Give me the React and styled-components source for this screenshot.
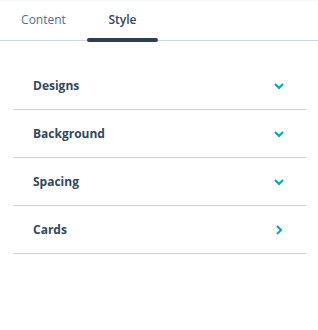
import React from 'react';
import styled, { createGlobalStyle } from 'styled-components';

const GlobalStyle = createGlobalStyle`
  html, body {
    margin: 0;
    padding: 0;
    background: #fff;
  }
  body {
    font-family: "Open Sans", "Liberation Sans", sans-serif;
    color: #33475b;
  }
`;

const Panel = styled.div`
  width: 318px;
  height: 330px;
  border-top: 1px solid #f5f8fa;
  box-sizing: border-box;
`;

const Tabs = styled.div`
  display: flex;
  height: 39px;
  border-bottom: 1px solid #cbd6e2;
  padding-left: 8px;
  box-sizing: content-box;
`;

const Tab = styled.div`
  position: relative;
  display: flex;
  align-items: center;
  justify-content: center;
  width: 71px;
  height: 100%;
  margin-right: 8px;
  padding-bottom: 2px;
  box-sizing: border-box;
  font-size: 12px;
  font-weight: ${p => (p.active ? 600 : 400)};
  color: ${p => (p.active ? '#33475b' : '#516f90')};

  &::after {
    content: '';
    display: ${p => (p.active ? 'block' : 'none')};
    position: absolute;
    left: 0;
    right: 0;
    bottom: -2px;
    height: 4px;
    border-radius: 2px;
    background: #2d3e50;
  }
`;

const List = styled.div`
  padding: 21px 12px 0 13px;
`;

const Row = styled.div`
  display: flex;
  align-items: center;
  justify-content: space-between;
  height: 47px;
  padding: 0 22px 0 20px;
  border-bottom: 1px solid #cbd6e2;
  font-size: 12px;
  font-weight: 700;
  color: #33475b;
`;

const Chevron = ({ dir }) => (
  <svg width="10" height="10" viewBox="0 0 10 10">
    {dir === 'right' ? (
      <path d="M3 1 L7 5 L3 9" fill="none" stroke="#00a4bd" strokeWidth="2" />
    ) : (
      <path d="M1 3 L5 7 L9 3" fill="none" stroke="#00a4bd" strokeWidth="2" />
    )}
  </svg>
);

const sections = [
  { label: 'Designs', dir: 'down' },
  { label: 'Background', dir: 'down' },
  { label: 'Spacing', dir: 'down' },
  { label: 'Cards', dir: 'right' },
];

export default function App() {
  return (
    <>
      <GlobalStyle />
      <Panel>
        <Tabs>
          <Tab>Content</Tab>
          <Tab active>Style</Tab>
        </Tabs>
        <List>
          {sections.map(s => (
            <Row key={s.label}>
              <span>{s.label}</span>
              <Chevron dir={s.dir} />
            </Row>
          ))}
        </List>
      </Panel>
    </>
  );
}
